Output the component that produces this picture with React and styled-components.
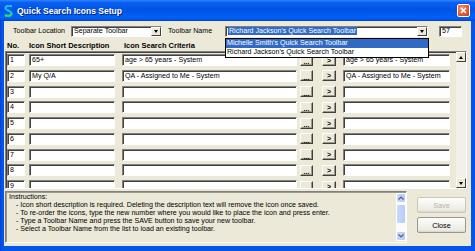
import React from 'react'
import styled, { createGlobalStyle } from 'styled-components'

const FONT = `"Liberation Sans", Arial, sans-serif`

const GlobalStyle = createGlobalStyle`
  html, body { margin: 0; padding: 0; background: #fff; overflow: hidden; }
  * { box-sizing: border-box; }
`

const rows = [
  { no: '1', desc: '65+', crit: 'age > 65 years - System', icon: 'age > 65 years - System' },
  { no: '2', desc: 'My Q/A', crit: 'QA - Assigned to Me - System', icon: 'QA - Assigned to Me - System' },
  { no: '3' }, { no: '4' }, { no: '5' }, { no: '6' }, { no: '7' }, { no: '8' }, { no: '9' },
]

const instructions = [
  'Icon short description is required. Deleting the description text will remove the icon once saved.',
  'To re-order the icons, type the new number where you would like to place the icon and press enter.',
  'Type a Toolbar Name and press the SAVE button to save your new toolbar.',
  'Select a Toolbar Name from the list to load an existing toolbar.',
]

// window frame + title bar
const Window = styled.div`
  width: 475px;
  height: 251px;
  display: flex;
  flex-direction: column;
  background: linear-gradient(to right, #0A3FCF 0, #0655EA 2px, #0655EA 100%);
  font-family: ${FONT};
  font-size: 7.1px;
  color: #000;
`

const TitleBar = styled.div`
  height: 21px;
  display: flex;
  align-items: center;
  padding: 0 5px 0 4px;
  background: linear-gradient(to bottom, #2F86FF 0%, #0A5EF2 12%, #0054E3 45%, #0060F8 85%, #0050E0 95%, #003FD0 100%);
`

const Title = styled.span`
  margin-left: 4px;
  color: #fff;
  font-weight: bold;
  font-size: 8.5px;
  text-shadow: 1px 1px 0 #0A1E73;
`

const CloseBox = styled.div`
  margin-left: auto;
  width: 13px;
  height: 13px;
  border: 1px solid #fff;
  border-radius: 2px;
  background: radial-gradient(circle at 35% 30%, #F29B7E 0%, #E35A2E 55%, #C23B12 100%);
  display: flex;
  align-items: center;
  justify-content: center;
`

const Body = styled.div`
  flex: 1;
  margin: 0 4px 5px 4px;
  background: #ECE9D8;
  position: relative;
  padding: 5px 0 3px 0;
  display: flex;
  flex-direction: column;
`

// top toolbar row
const TopRow = styled.div`
  display: flex;
  align-items: center;
  height: 11px;
  padding-left: 9px;
`

const Label = styled.span`
  width: ${p => p.w}px;
  margin-left: ${p => p.ml || 0}px;
  white-space: nowrap;
  line-height: 11px;
`

const Sunken = styled.div`
  background: #fff;
  border: 1px solid;
  border-color: #808080 #fff #fff #808080;
  box-shadow: inset 1px 1px 0 #404040;
  overflow: hidden;
  white-space: nowrap;
`

const Combo = styled(Sunken)`
  width: ${p => p.w}px;
  height: 11px;
  margin-left: ${p => p.ml || 0}px;
  display: flex;
  align-items: center;
  padding-left: 2px;
  line-height: 9px;
`

const ComboText = styled.span`
  flex: 1;
  overflow: hidden;
`

const Highlight = styled.span`
  background: #316AC5;
  color: #fff;
  padding: 0 1px;
`

const ArrowBtn = styled.div`
  width: 10px;
  height: 9px;
  background: #ECE9D8;
  border: 1px solid;
  border-color: #fff #404040 #404040 #fff;
  display: flex;
  align-items: center;
  justify-content: center;
`

const Triangle = styled.div`
  width: 0;
  height: 0;
  border-left: 2.5px solid transparent;
  border-right: 2.5px solid transparent;
  border-${p => (p.up ? 'bottom' : 'top')}: 3px solid #000;
`

const NumBox = styled(Sunken)`
  width: 23px;
  height: 11px;
  margin-left: 11px;
  padding-left: 2px;
  line-height: 9px;
`

const DropList = styled.div`
  position: absolute;
  left: 221px;
  top: 17px;
  width: 204px;
  border: 1px solid #000;
  background: #fff;
  z-index: 2;
`

const DropItem = styled.div`
  height: 9px;
  line-height: 9px;
  padding-left: 1px;
  white-space: nowrap;
  background: ${p => (p.sel ? '#316AC5' : '#fff')};
  color: ${p => (p.sel ? '#fff' : '#000')};
`

// grid
const HeaderRow = styled.div`
  display: flex;
  align-items: center;
  height: 10px;
  margin-top: 3px;
  padding-left: 3px;
  font-weight: bold;
  font-size: 7.5px;
`

const HeadCell = styled.span`
  width: ${p => p.w}px;
  white-space: nowrap;
`

const Grid = styled.div`
  margin: 1px 0 0 1px;
  width: 462px;
  height: 138px;
  display: flex;
  border: 1px solid;
  border-color: #808080 #fff #fff #808080;
  box-shadow: inset 1px 1px 0 #404040;
  overflow: hidden;
`

const Rows = styled.div`
  flex: 1;
  padding: 2px 0 0 1px;
  overflow: hidden;
`

const Row = styled.div`
  display: flex;
  align-items: center;
  height: 12px;
  margin-bottom: 3.75px;
`

const Cell = styled(Sunken)`
  width: ${p => p.w}px;
  height: 12px;
  margin-left: ${p => p.ml || 0}px;
  padding-left: 2px;
  line-height: 10px;
  flex-shrink: 0;
`

const SmallButton = styled.div`
  width: ${p => p.w}px;
  height: 11px;
  margin-left: ${p => p.ml}px;
  flex-shrink: 0;
  background: #ECE9D8;
  border: 1px solid;
  border-color: #fff #404040 #404040 #fff;
  box-shadow: inset -1px -1px 0 #9C9A8E;
  display: flex;
  align-items: center;
  justify-content: center;
  font-weight: bold;
  font-size: 7px;
  line-height: 7px;
  padding-top: ${p => p.pt || 0}px;
`

const ClassicScroll = styled.div`
  width: 10px;
  display: flex;
  flex-direction: column;
  justify-content: space-between;
  background: #F2F0E8;
`

const ScrollBtn = styled(ArrowBtn)`
  width: 10px;
  height: 10px;
`

// bottom
const Bottom = styled.div`
  display: flex;
  margin-top: 2px;
`

const InfoBox = styled.div`
  margin-left: 1px;
  width: 402px;
  height: 52px;
  display: flex;
  border: 1px solid;
  border-color: #808080 #fff #fff #808080;
  box-shadow: inset 1px 1px 0 #9C9A8E;
  background: #ECE9D8;
`

const InfoText = styled.div`
  flex: 1;
  padding: 1px 0 0 3px;
  line-height: 8px;
  white-space: nowrap;
  overflow: hidden;
`

const Bullet = styled.div`
  padding-left: 7px;
`

const XpScroll = styled.div`
  width: 10px;
  margin: 1px 0;
  display: flex;
  flex-direction: column;
  background: #FBFBF8;
`

const XpBtn = styled.div`
  height: 10px;
  border-radius: 2px;
  background: linear-gradient(to right, #C9D9FC, #B6CBF9);
  border: 1px solid #fff;
  display: flex;
  align-items: center;
  justify-content: center;
  margin-top: ${p => (p.bottom ? 'auto' : 0)};
`

const XpThumb = styled.div`
  height: 20px;
  margin-top: 1px;
  border-radius: 2px;
  border: 1px solid #fff;
  background: linear-gradient(to right, #C9D9FC, #B7CCFA);
`

const Buttons = styled.div`
  display: flex;
  flex-direction: column;
  gap: 4px;
  margin-left: 10px;
  padding-top: 6px;
`

const DlgButton = styled.div`
  width: 49px;
  height: 16px;
  border: 1px solid ${p => (p.disabled ? '#C9C7BA' : '#9A988C')};
  border-radius: 2px;
  background: linear-gradient(to bottom, #FDFDFB, #ECEBE5 85%, #D8D5C8);
  display: flex;
  align-items: center;
  justify-content: center;
  color: ${p => (p.disabled ? '#B9B6A8' : '#000')};
  font-size: 7.3px;
`

function Chevron({ up }) {
  return (
    <svg width="6" height="4" viewBox="0 0 6 4">
      <path d={up ? 'M0.5 3.5 L3 1 L5.5 3.5' : 'M0.5 0.5 L3 3 L5.5 0.5'} stroke="#4D6185" strokeWidth="1.2" fill="none" />
    </svg>
  )
}

function AppIcon() {
  return (
    <svg width="9" height="12" viewBox="0 0 9 12">
      <path d="M8 1.5 C5 0 1 1 1.5 3.5 C2 5.5 7.5 5.5 7.5 8.5 C7.5 11 3 11.5 1 10" stroke="#16C0E6" strokeWidth="2.2" fill="none" />
      <path d="M1 10 C3 11.5 7.5 11 7.5 8.5" stroke="#2FD36B" strokeWidth="2.2" fill="none" />
    </svg>
  )
}

export default function App() {
  return (
    <Window>
      <GlobalStyle />
      <TitleBar>
        <AppIcon />
        <Title>Quick Search Icons Setup</Title>
        <CloseBox>
          <svg width="7" height="7" viewBox="0 0 7 7">
            <path d="M1 1 L6 6 M6 1 L1 6" stroke="#fff" strokeWidth="1.5" />
          </svg>
        </CloseBox>
      </TitleBar>

      <Body>
        <TopRow>
          <Label w={58}>Toolbar Location</Label>
          <Combo w={91}>
            <ComboText>Separate Toolbar</ComboText>
            <ArrowBtn><Triangle /></ArrowBtn>
          </Combo>
          <Label w={57} ml={6}>Toolbar Name</Label>
          <Combo w={203}>
            <ComboText><Highlight>Richard Jackson's Quick Search Toolbar</Highlight></ComboText>
            <ArrowBtn><Triangle /></ArrowBtn>
          </Combo>
          <NumBox>57</NumBox>
        </TopRow>

        <DropList>
          <DropItem sel>Michelle Smith's Quick Search Toolbar</DropItem>
          <DropItem>Richard Jackson's Quick Search Toolbar</DropItem>
        </DropList>

        <HeaderRow>
          <HeadCell w={22}>No.</HeadCell>
          <HeadCell w={95}>Icon Short Description</HeadCell>
          <HeadCell>Icon Search Criteria</HeadCell>
        </HeaderRow>

        <Grid>
          <Rows>
            {rows.map(r => (
              <Row key={r.no}>
                <Cell w={18}>{r.no}</Cell>
                <Cell w={86} ml={4}>{r.desc}</Cell>
                <Cell w={175} ml={7}>{r.crit}</Cell>
                <SmallButton w={13} ml={3} pt={3}>...</SmallButton>
                <SmallButton w={14} ml={9}>&gt;</SmallButton>
                <Cell w={107} ml={7}>{r.icon}</Cell>
              </Row>
            ))}
          </Rows>
          <ClassicScroll>
            <ScrollBtn><Triangle up /></ScrollBtn>
            <ScrollBtn><Triangle /></ScrollBtn>
          </ClassicScroll>
        </Grid>

        <Bottom>
          <InfoBox>
            <InfoText>
              <div>Instructions:</div>
              {instructions.map(t => (
                <Bullet key={t}>- {t}</Bullet>
              ))}
            </InfoText>
            <XpScroll>
              <XpBtn><Chevron up /></XpBtn>
              <XpThumb />
              <XpBtn bottom><Chevron /></XpBtn>
            </XpScroll>
          </InfoBox>
          <Buttons>
            <DlgButton disabled>Save</DlgButton>
            <DlgButton>Close</DlgButton>
          </Buttons>
        </Bottom>
      </Body>
    </Window>
  )
}
